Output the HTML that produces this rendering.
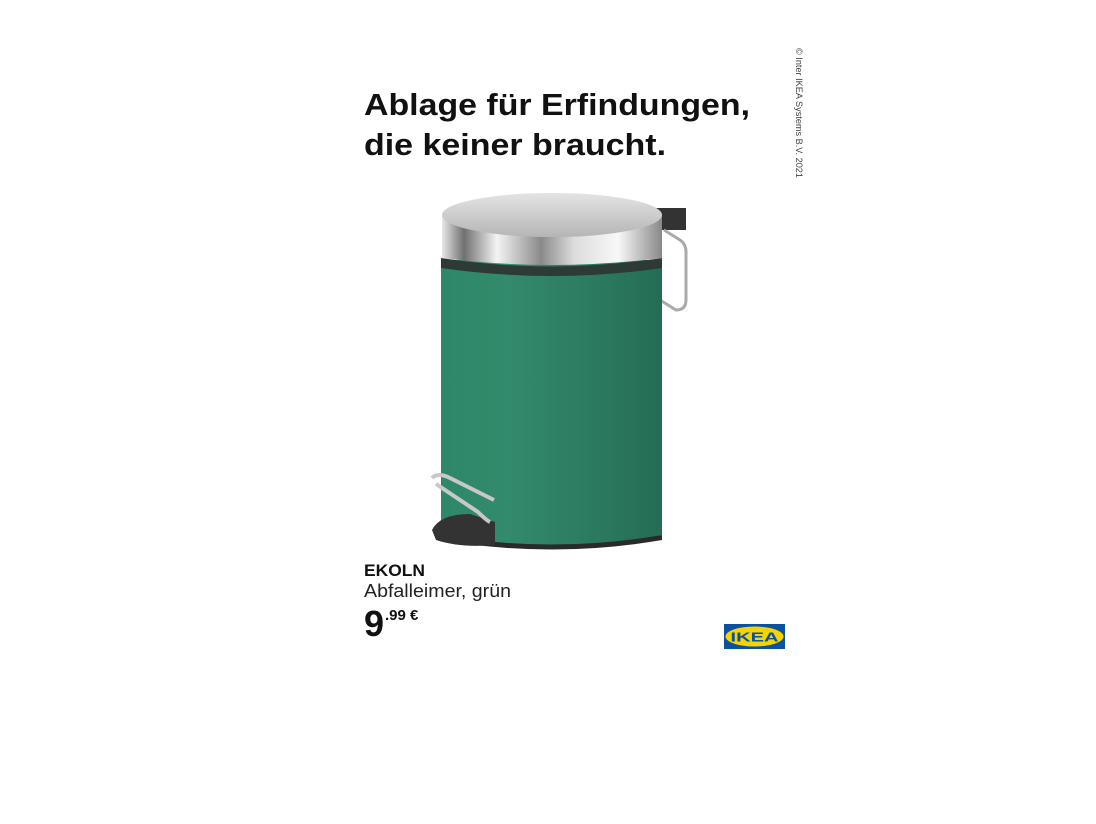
<!DOCTYPE html>
<html><head><meta charset="utf-8"><style>
html,body{margin:0;padding:0;background:#fff;width:1096px;height:824px;overflow:hidden}
svg{display:block}
</style></head><body>
<svg width="1096" height="824" viewBox="0 0 1096 824" xmlns="http://www.w3.org/2000/svg" font-family="Liberation Sans, sans-serif">
<defs>
<linearGradient id="body" x1="0" x2="1">
<stop offset="0" stop-color="#2d8868"/><stop offset="0.3" stop-color="#338a6c"/><stop offset="0.7" stop-color="#2b7a60"/><stop offset="1" stop-color="#256c55"/>
</linearGradient>
<linearGradient id="rim" x1="0" x2="1">
<stop offset="0" stop-color="#e8e8e8"/><stop offset="0.1" stop-color="#707070"/><stop offset="0.25" stop-color="#f4f4f4"/><stop offset="0.45" stop-color="#8a8a8a"/><stop offset="0.6" stop-color="#dcdcdc"/><stop offset="0.8" stop-color="#f8f8f8"/><stop offset="1" stop-color="#888"/>
</linearGradient>
<linearGradient id="top" x1="0" y1="0" x2="0" y2="1">
<stop offset="0" stop-color="#e4e4e4"/><stop offset="1" stop-color="#b5b5b5"/>
</linearGradient>
</defs>
<text x="364" y="115" font-size="31" font-weight="bold" fill="#111" textLength="386" lengthAdjust="spacingAndGlyphs">Ablage für Erfindungen,</text>
<text x="364" y="155" font-size="31" font-weight="bold" fill="#111" textLength="302" lengthAdjust="spacingAndGlyphs">die keiner braucht.</text>
<text transform="translate(796,48) rotate(90)" font-size="9" fill="#444" textLength="130" lengthAdjust="spacingAndGlyphs">© Inter IKEA Systems B.V. 2021</text>
<rect x="656" y="208" width="30" height="22" fill="#333"/>
<path d="M664 230 L680 240 Q686 244 686 252 L686 300 Q686 310 676 310 L660 300" fill="none" stroke="#aaa" stroke-width="3"/>
<path d="M441 260 L662 260 L662 535 Q552 558 441 535 Z" fill="url(#body)"/>
<path d="M441 535 Q552 554 662 535 L662 540 Q552 559 441 540 Z" fill="#2a2a2a"/>
<path d="M441 258 Q552 275 662 258 L662 268 Q552 284 441 268 Z" fill="#2d3a35"/>
<path d="M442 215 L662 215 L662 258 Q552 272 442 258 Z" fill="url(#rim)"/>
<ellipse cx="552" cy="215" rx="110" ry="22" fill="url(#top)"/>
<path d="M432 530 Q440 514 470 514 L495 522 L495 545 Q460 548 436 540 Z" fill="#333"/>
<path d="M432 478 Q438 472 450 478 L494 500 M436 484 L478 512 Q486 520 490 522" fill="none" stroke="#c8c8c8" stroke-width="4"/>
<text x="364" y="576" font-size="17" font-weight="bold" fill="#111" textLength="61" lengthAdjust="spacingAndGlyphs">EKOLN</text>
<text x="364" y="597" font-size="18" fill="#222" textLength="147" lengthAdjust="spacingAndGlyphs">Abfalleimer, grün</text>
<text x="364" y="636" font-size="36" font-weight="bold" fill="#111">9</text>
<text x="385" y="620" font-size="15" font-weight="bold" fill="#111">.99 €</text>
<rect x="724" y="624" width="61" height="25" fill="#0a52a0"/>
<ellipse cx="754.5" cy="636.5" rx="29" ry="10" fill="#f6d400"/>
<text x="754.5" y="641.5" font-size="13" font-weight="bold" fill="#0a52a0" text-anchor="middle" textLength="48" lengthAdjust="spacingAndGlyphs">IKEA</text>
</svg>
</body></html>
